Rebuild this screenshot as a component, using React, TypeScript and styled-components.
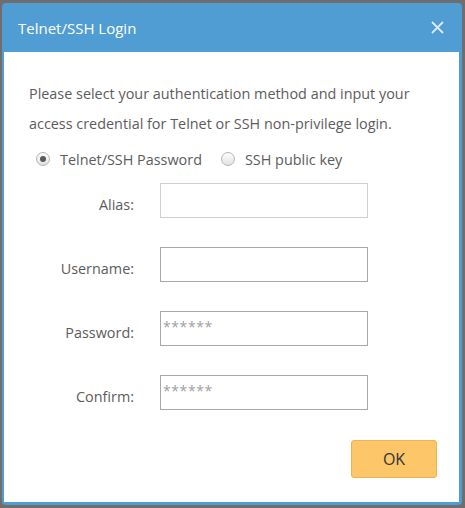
import React from "react";
import styled, { createGlobalStyle } from "styled-components";

const Global = createGlobalStyle`
  html, body { margin: 0; padding: 0; }
  body {
    background: #6e6e6e;
    font-family: "Open Sans", "Liberation Sans", sans-serif;
    width: 465px;
    height: 508px;
    overflow: hidden;
  }
`;

const Page = styled.div`
  padding: 3px 3px 3px 2px;
  height: 508px;
  box-sizing: border-box;
`;

const Modal = styled.div`
  background: #4f9dd3;
  border-radius: 4px;
  padding: 0 3px 3px 2px;
  height: 502px;
  box-sizing: border-box;
  display: flex;
  flex-direction: column;
`;

const Header = styled.div`
  height: 49px;
  display: flex;
  align-items: center;
  justify-content: space-between;
  padding: 0 14px 0 14px;
  color: #fff;
  font-size: 15px;
`;

const Title = styled.div`
  margin-top: 0px;
`;

const Close = styled.div`
  width: 13px;
  height: 13px;
  display: flex;
  margin-right: 1px;
`;

const Body = styled.div`
  flex: 1;
  background: #fff;
  padding: 27px 0 0 25px;
  color: #555;
  font-size: 14.4px;
`;

const Intro = styled.p`
  margin: 0;
  line-height: 30px;
  color: #5c5c5c;
`;

const RadioRow = styled.div`
  display: flex;
  align-items: center;
  margin: 8px 0 0 7px;
  height: 24px;
`;

const RadioItem = styled.label`
  display: flex;
  align-items: center;
  margin-right: 19px;
  color: #5c5c5c;
`;

const RadioCircle = styled.span<{ $checked?: boolean }>`
  width: 14px;
  height: 14px;
  border-radius: 50%;
  border: 1px solid #b5b5b5;
  background: linear-gradient(#fdfdfd, #e2e2e2);
  box-sizing: border-box;
  display: flex;
  align-items: center;
  justify-content: center;
  margin-right: 10px;
  &::after {
    content: "";
    width: 6px;
    height: 6px;
    border-radius: 50%;
    background: ${(p) => (p.$checked ? "#5a5a5a" : "transparent")};
  }
`;

const Form = styled.div`
  display: grid;
  grid-template-columns: 105px 208px;
  column-gap: 26px;
  row-gap: 29px;
  margin-top: 12px;
`;

const Label = styled.div`
  text-align: right;
  align-self: center;
  color: #5c5c5c;
  padding-top: 8px;
`;

const Input = styled.div<{ $light?: boolean }>`
  height: 35px;
  border: 1px solid ${(p) => (p.$light ? "#cfcfcf" : "#a9a9a9")};
  box-sizing: border-box;
  color: #a0a0a0;
  font-size: 14px;
  padding: 5px 0 0 2px;
  letter-spacing: 0.6px;
`;

const Footer = styled.div`
  display: flex;
  justify-content: flex-end;
  padding-right: 22px;
  margin-top: 30px;
`;

const OkButton = styled.button`
  width: 86px;
  height: 38px;
  background: #fcc669;
  border: 1px solid #efb24f;
  border-radius: 3px;
  font-family: inherit;
  font-size: 16px;
  color: #333;
`;

export default function App() {
  return (
    <>
      <Global />
      <Page>
        <Modal>
          <Header>
            <Title>Telnet/SSH Login</Title>
            <Close>
              <svg width="13" height="13" viewBox="0 0 13 13">
                <path d="M1 1L12 12M12 1L1 12" stroke="#dde9f4" strokeWidth="1.8" />
              </svg>
            </Close>
          </Header>
          <Body>
            <Intro>
              Please select your authentication method and input your
              <br />
              access credential for Telnet or SSH non-privilege login.
            </Intro>
            <RadioRow>
              <RadioItem>
                <RadioCircle $checked />
                Telnet/SSH Password
              </RadioItem>
              <RadioItem>
                <RadioCircle />
                SSH public key
              </RadioItem>
            </RadioRow>
            <Form>
              <Label>Alias:</Label>
              <Input $light />
              <Label>Username:</Label>
              <Input />
              <Label>Password:</Label>
              <Input>******</Input>
              <Label>Confirm:</Label>
              <Input>******</Input>
            </Form>
            <Footer>
              <OkButton>OK</OkButton>
            </Footer>
          </Body>
        </Modal>
      </Page>
    </>
  );
}
